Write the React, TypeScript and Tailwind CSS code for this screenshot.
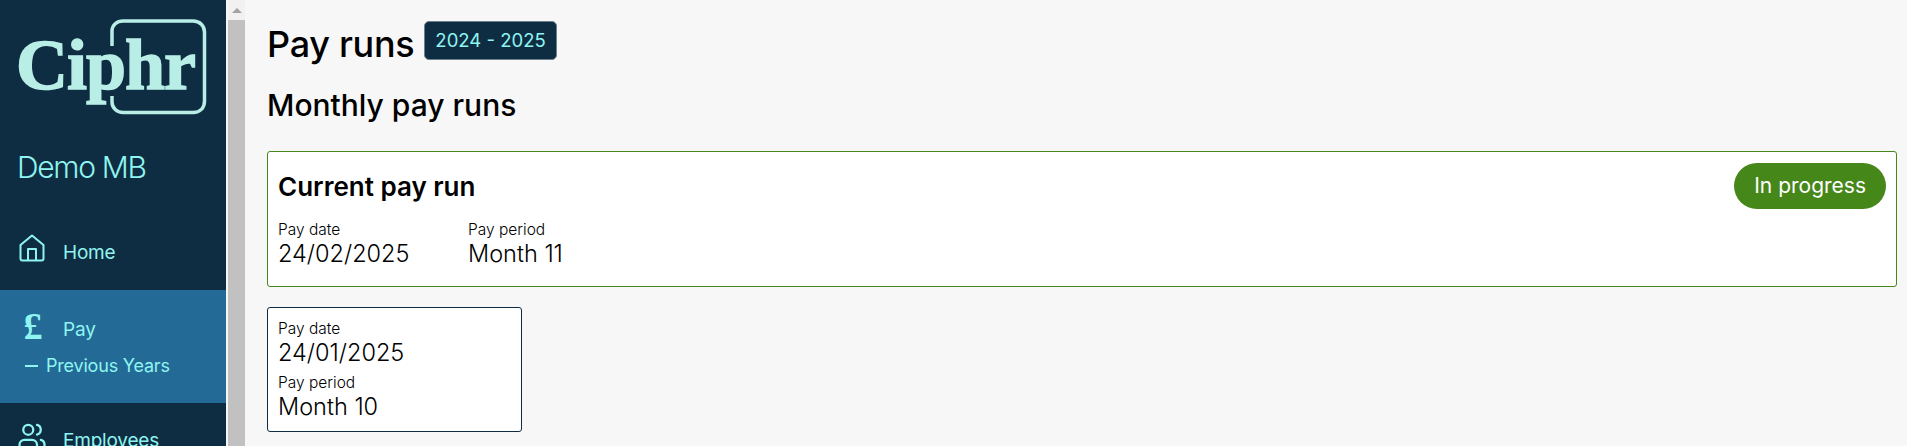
import { Users } from "lucide-react";

const font = { fontFamily: "Inter, 'Noto Sans', sans-serif" };

function Logo() {
  return (
    <div className="relative h-[116px] w-[226px]">
      <svg className="absolute top-0 left-0" width="226" height="116" viewBox="0 0 226 116" fill="none">
        <path
          d="M112 46V31C112 25 117 21 123 21H193C200 21 204.500 26 204.500 32V101C204.500 108 200 112.500 193 112.500H123C117 112.500 112 108 112 102V96"
          stroke="#b8eee6"
          strokeWidth="3.5"
        />
      </svg>
      <span className="absolute top-[25px] left-[16px] font-['Liberation_Serif',serif] text-[72px] leading-[80px] font-bold tracking-[-1px] text-[#b8eee6] [-webkit-text-stroke:1.500px_#b8eee6]">
        Ciphr
      </span>
    </div>
  );
}

function HouseIcon() {
  return (
    <svg width="26" height="28" viewBox="0 0 26 28" fill="none" stroke="currentColor" strokeWidth="2" strokeLinejoin="round">
      <path d="M1.500 11L13 1.500L24.500 11V24.500C24.500 25.600 23.600 26.500 22.500 26.500H3.500C2.400 26.500 1.500 25.600 1.500 24.500Z" />
      <path d="M9 26.500V15H17V26.500" />
    </svg>
  );
}

function Field({ label, value }: { label: string; value: string }) {
  return (
    <div>
      <div className="text-[15.500px] leading-[19px] font-light text-black">{label}</div>
      <div className="text-[23.500px] leading-[30px] font-light text-black">{value}</div>
    </div>
  );
}

export default function App() {
  return (
    <div className="flex h-[446px] overflow-hidden bg-[#f7f7f7]" style={font}>
      {/* Sidebar */}
      <aside className="w-[226px] shrink-0 overflow-hidden bg-[#0f2d42] text-[#8ff5f0]">
        <Logo />
        <div className="mt-[33px] pl-[17px] text-[30px] leading-9 font-light tracking-[-1.3px]">Demo MB</div>
        <nav className="mt-[35px]">
          <div className="flex h-[70px] items-start pt-[14px] pl-[19px]">
            <HouseIcon />
            <span className="ml-[18px] pt-[7px] text-[19px] leading-6 font-normal tracking-[-0.2px]">Home</span>
          </div>
          <div className="h-[113px] bg-[#236a97] pt-[20px] pl-[20px]">
            <div className="flex items-start">
              <span className="h-[32px] w-[26px] text-center font-['Liberation_Serif',serif] text-[38px] leading-[32px] font-bold">£</span>
              <span className="ml-[17px] pt-[8px] text-[19px] leading-6 font-normal tracking-[-0.2px]">Pay</span>
            </div>
            <div className="mt-[12px] flex items-center pl-[5px] text-[18px] leading-6 font-normal tracking-[-0.2px]">
              <span className="mr-[8px] h-[1.500px] w-[13px] bg-[#8ff5f0]" />
              Previous Years
            </div>
          </div>
          <div className="flex h-[70px] items-start pt-[18px] pl-[17px]">
            <Users size={30} strokeWidth={1.8} />
            <span className="ml-[16px] pt-[8px] text-[19px] leading-6 font-normal tracking-[-0.2px]">Employees</span>
          </div>
        </nav>
      </aside>

      {/* Scrollbar */}
      <div className="ml-[2px] flex w-[17px] shrink-0 flex-col bg-[#f1f1f1]">
        <div className="flex h-[20px] items-center justify-center">
          <svg width="10" height="5" viewBox="0 0 10 5">
            <path d="M5 0L10 5H0Z" fill="#a3a3a3" />
          </svg>
        </div>
        <div className="flex-1 bg-[#c1c1c1]" />
      </div>

      {/* Main */}
      <main className="min-w-0 flex-1 pt-[20px] pr-[10px] pl-[22px]">
        <div className="flex items-start">
          <h1 className="text-[36px] leading-[48px] font-medium tracking-[-0.3px] text-black">Pay runs</h1>
          <span className="mt-[1px] ml-[10px] flex h-[39px] items-center rounded-[5px] border border-[#6b7f8c] bg-[#0f2d42] px-[10px] text-[18.500px] font-normal text-[#8ff5f0]">
            2024 - 2025
          </span>
        </div>
        <h2 className="mt-[17px] text-[30px] leading-[40px] font-medium text-black">Monthly pay runs</h2>

        <section className="mt-[26px] h-[136px] rounded-[3px] border border-[#46871a] bg-white px-[10px] pt-[10px]">
          <div className="flex items-center justify-between">
            <h3 className="pt-[2px] text-[26px] leading-[46px] font-semibold text-black">Current pay run</h3>
            <span className="flex h-[46px] items-center rounded-full bg-[#46871a] px-[20px] text-[21px] font-normal text-white">
              In progress
            </span>
          </div>
          <div className="mt-[10px] flex gap-[60px]">
            <div className="w-[130px]">
              <Field label="Pay date" value="24/02/2025" />
            </div>
            <Field label="Pay period" value="Month 11" />
          </div>
        </section>

        <section className="mt-[20px] h-[125px] w-[255px] rounded-[3px] border border-[#0f2d42] bg-white px-[10px] pt-[11px]">
          <Field label="Pay date" value="24/01/2025" />
          <div className="mt-[5px]">
            <Field label="Pay period" value="Month 10" />
          </div>
        </section>
      </main>
    </div>
  );
}
